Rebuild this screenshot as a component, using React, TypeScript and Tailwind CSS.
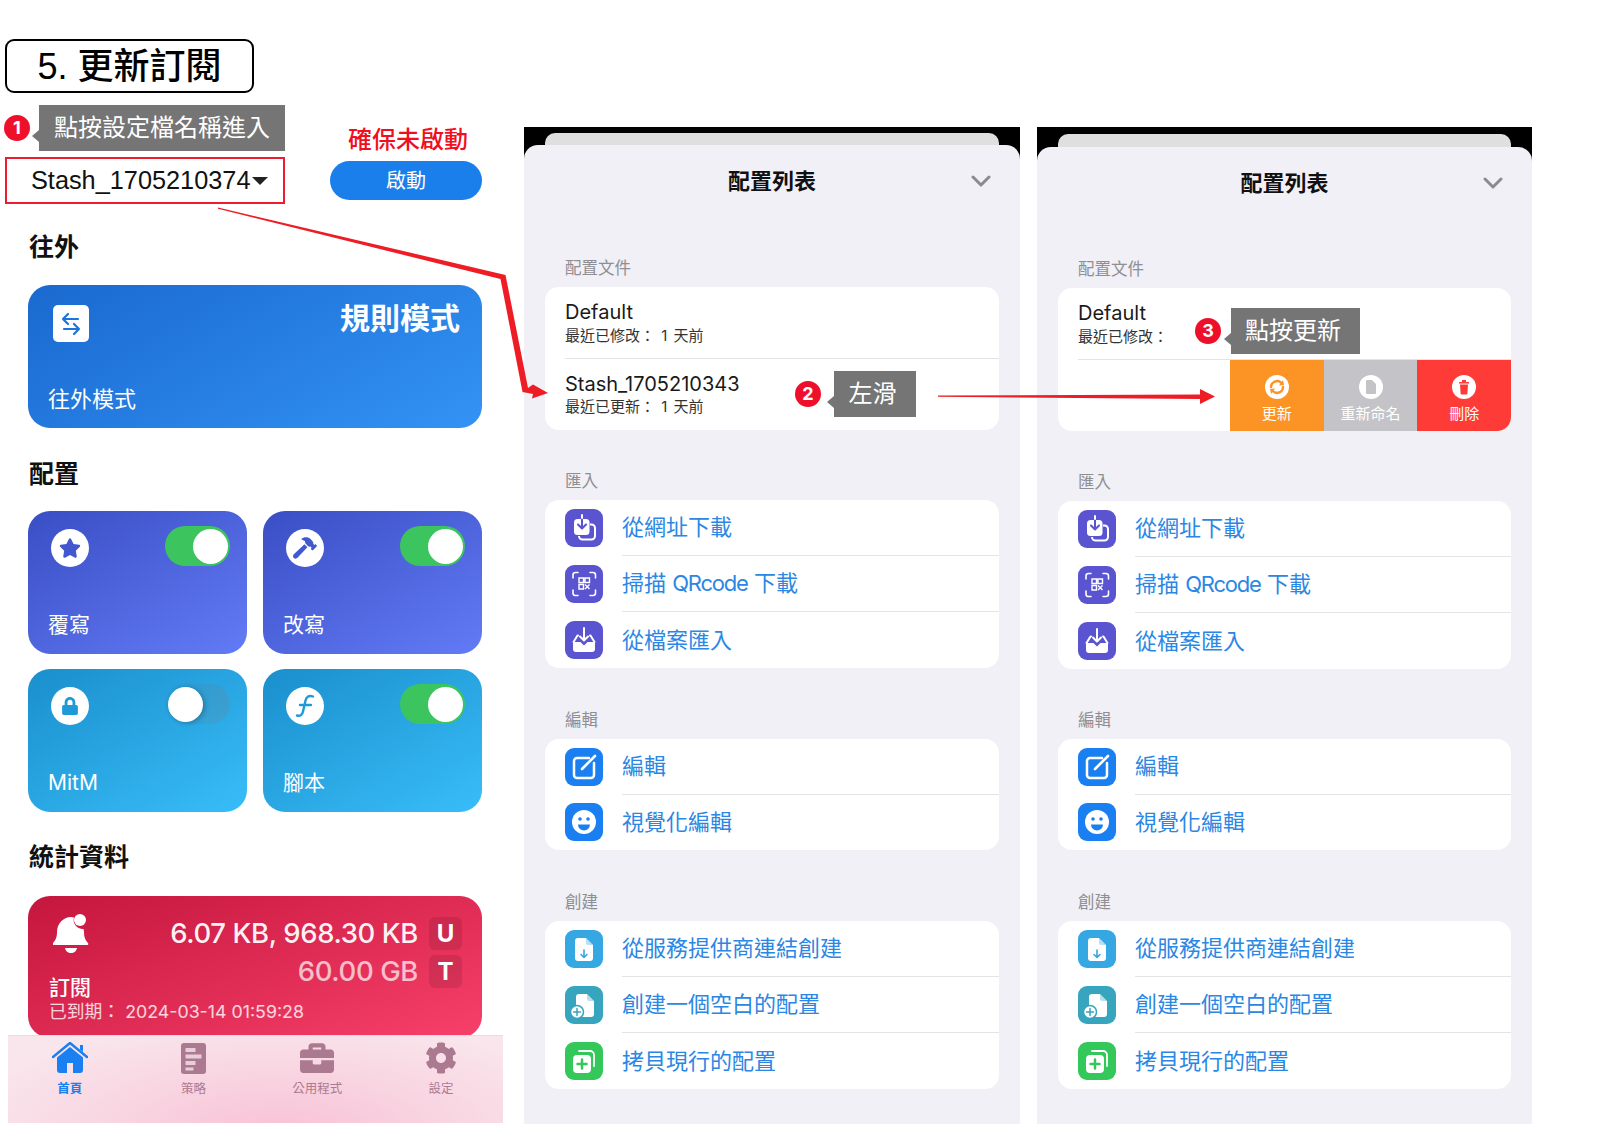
import type { ReactNode } from 'react';
import { FaBriefcase, FaCog, FaHammer, FaLock, FaStar } from 'react-icons/fa';

const Callout = ({ n, text, gapClass, boxClass }: { n: number; text: string; gapClass: string; boxClass: string }) => (
  <div className={`flex items-center ${gapClass}`}>
    <div className="w-[26px] h-[26px] rounded-full bg-[#ee0f2b] text-white text-[18px] font-bold flex items-center justify-center leading-none">
      {n}
    </div>
    <div className={`relative h-[46px] bg-[#757575] text-white text-[24px] flex items-center justify-center ${boxClass}`}>
      <span className="absolute -left-[7px] bottom-[9px] w-0 h-0 border-y-[6px] border-y-transparent border-r-[7px] border-r-[#757575]" />
      {text}
    </div>
  </div>
);

const Toggle = ({ on = true }: { on?: boolean }) =>
  on ? (
    <div className="w-[65px] h-[40px] rounded-full bg-[#3cc45f] flex items-center justify-end pr-[2px]">
      <div className="w-[35px] h-[35px] rounded-full bg-white" />
    </div>
  ) : (
    <div className="w-[65px] h-[40px] rounded-full bg-[linear-gradient(90deg,rgba(0,0,0,0.02),rgba(120,120,120,0.22))] flex items-center pl-[3px]">
      <div className="w-[35px] h-[35px] rounded-full bg-white shadow-[2px_1px_5px_rgba(0,0,0,0.25)]" />
    </div>
  );

const ConfigCard = ({ icon, label, on, bgClass }: { icon: ReactNode; label: string; on?: boolean; bgClass: string }) => (
  <div className={`h-[143px] rounded-[22px] pl-[20px] pr-[17px] pt-[15px] pb-[16px] flex flex-col justify-between text-white ${bgClass}`}>
    <div className="flex items-start justify-between">
      <div className="ml-[3px] mt-[3px] w-[38px] h-[38px] rounded-full bg-white flex items-center justify-center">{icon}</div>
      <Toggle on={on} />
    </div>
    <div className="text-[21px] leading-[26px]">{label}</div>
  </div>
);

const Tab = ({ icon, label, active }: { icon: ReactNode; label: string; active?: boolean }) => (
  <div className={`w-[124px] flex flex-col items-center ${active ? 'text-[#1a7ff0]' : 'text-[#ab7a90]'}`}>
    <div className="h-[36px] flex items-center justify-center">{icon}</div>
    <div className={`mt-[4px] text-[12.5px] leading-[18px] ${active ? 'font-bold' : ''}`}>{label}</div>
  </div>
);

const Tile = ({ bgClass, children }: { bgClass: string; children: ReactNode }) => (
  <div className={`w-[38px] h-[38px] rounded-[9px] shrink-0 ${bgClass}`}>
    <svg viewBox="0 0 38 38" width="38" height="38">
      {children}
    </svg>
  </div>
);

const DownloadIcon = () => (
  <Tile bgClass="bg-[#5a54d0]">
    <path d="M25 15.500h1.500a3.500 3.500 0 0 1 3.500 3.500v8a3.500 3.500 0 0 1-3.500 3.500h-9a3.500 3.500 0 0 1-3.500-3.500" fill="none" stroke="#fff" strokeWidth="2" />
    <rect x="9" y="10" width="15.500" height="16" rx="3.500" fill="#fff" />
    <path d="M17 7v12M13 15.500l4 4 4-4" fill="none" stroke="#5a54d0" strokeWidth="2" strokeLinecap="round" strokeLinejoin="round" />
    <path d="M17 6v3" stroke="#fff" strokeWidth="2" strokeLinecap="round" />
  </Tile>
);

const ScanIcon = () => (
  <Tile bgClass="bg-[#5a54d0]">
    <path d="M8 13V10a2.500 2.500 0 0 1 2.500-2.500H13M25 7.500h3a2.500 2.500 0 0 1 2.500 2.500v3M30.500 25v3a2.500 2.500 0 0 1-2.500 2.500h-3M13 30.500h-3A2.500 2.500 0 0 1 8 28v-3" fill="none" stroke="#fff" strokeWidth="1.600" strokeLinecap="round" />
    <path d="M14 13h4.500v4.500H14zM20 13h4.500v4.500H20zM14 19.500h4.500V24H14zM20 19.500l4.500 4.500M24.500 19.500L20 24" fill="none" stroke="#fff" strokeWidth="1.400" />
  </Tile>
);

const TrayIcon = () => (
  <Tile bgClass="bg-[#5a54d0]">
    <path d="M13 14.500h-.5L8.500 21M25 14.500h.5l4 6.500" fill="none" stroke="#fff" strokeWidth="2" strokeLinecap="round" strokeLinejoin="round" />
    <path d="M8 21h7.500l3.500 3.500 3.500-3.500H30v7a3 3 0 0 1-3 3H11a3 3 0 0 1-3-3z" fill="#fff" />
    <path d="M19 7v12M15 15.500l4 4 4-4" fill="none" stroke="#fff" strokeWidth="2" strokeLinecap="round" strokeLinejoin="round" />
  </Tile>
);

const EditIcon = () => (
  <Tile bgClass="bg-[#1a7ff0]">
    <path d="M24 10H12a3 3 0 0 0-3 3v14a3 3 0 0 0 3 3h14a3 3 0 0 0 3-3V15" fill="none" stroke="#fff" strokeWidth="2.500" strokeLinecap="round" />
    <path d="M17 21L30 8" fill="none" stroke="#fff" strokeWidth="2.600" strokeLinecap="round" />
  </Tile>
);

const SmileIcon = () => (
  <Tile bgClass="bg-[#1a7ff0]">
    <circle cx="19" cy="19" r="12" fill="#fff" />
    <circle cx="15" cy="16" r="1.800" fill="#1a7ff0" />
    <circle cx="23" cy="16" r="1.800" fill="#1a7ff0" />
    <path d="M13 21.500h12a6 6 0 0 1-12 0z" fill="#1a7ff0" />
  </Tile>
);

const FileDownIcon = () => (
  <Tile bgClass="bg-[#35a7e3]">
    <path d="M13 8h8l7 7v13a3 3 0 0 1-3 3H13a3 3 0 0 1-3-3V11a3 3 0 0 1 3-3z" fill="#fff" />
    <path d="M21 8v5a2 2 0 0 0 2 2h5z" fill="#35a7e3" opacity="0.35" />
    <path d="M19 20v7M16 24.500l3 3 3-3" fill="none" stroke="#35a7e3" strokeWidth="1.600" strokeLinecap="round" strokeLinejoin="round" />
  </Tile>
);

const FilePlusIcon = () => (
  <Tile bgClass="bg-[#36a5bd]">
    <path d="M14 8h8l7 7v13a3 3 0 0 1-3 3H14a3 3 0 0 1-3-3V11a3 3 0 0 1 3-3z" fill="#fff" />
    <path d="M22 8v5a2 2 0 0 0 2 2h5z" fill="#36a5bd" opacity="0.35" />
    <circle cx="12" cy="26" r="6.500" fill="#fff" stroke="#36a5bd" strokeWidth="1.500" />
    <path d="M12 22.500v7M8.500 26h7" stroke="#36a5bd" strokeWidth="1.500" strokeLinecap="round" />
  </Tile>
);

const CopyPlusIcon = () => (
  <Tile bgClass="bg-[#34c759]">
    <path d="M14 9h11a4 4 0 0 1 4 4v11" fill="none" stroke="#fff" strokeWidth="1.800" strokeLinecap="round" />
    <rect x="8" y="13" width="18" height="18" rx="4" fill="#fff" />
    <path d="M17 17.500v9M12.500 22h9" stroke="#34c759" strokeWidth="2.500" strokeLinecap="round" />
  </Tile>
);

const ListRow = ({ icon, text, last }: { icon: ReactNode; text: ReactNode; last?: boolean }) => (
  <div className="h-[56px] flex items-center pl-[20px] gap-[19px]">
    {icon}
    <div className={`flex-1 h-full flex items-center whitespace-pre text-[22px] text-[#2b87e3] ${last ? '' : 'border-b border-[#e3e3e8]'}`}>{text}</div>
  </div>
);

const Label = ({ text }: { text: string }) => (
  <div className="pl-[20px] h-[20px] mb-[9px] text-[16.500px] leading-[20px] text-[#8e8e93]">{text}</div>
);

const Sheet = ({ profiles, mts }: { profiles: ReactNode; mts: string[] }) => (
  <div className="flex-1 bg-[#f0f0f6] rounded-t-[14px] px-[21px] flex flex-col">
    <div className="h-[72px] relative flex items-center justify-center text-[22px] font-bold text-[#111]">
      配置列表
      <svg className="absolute right-[8px] top-[30px]" width="20" height="12" viewBox="0 0 20 12">
        <path d="M2 2l8 8 8-8" fill="none" stroke="#8a8a8f" strokeWidth="3" strokeLinecap="round" strokeLinejoin="round" />
      </svg>
    </div>
    <div className={mts[0]}>
      <Label text="配置文件" />
      {profiles}
    </div>
    <div className={mts[1]}>
      <Label text="匯入" />
      <div className="bg-white rounded-[14px]">
        <ListRow icon={<DownloadIcon />} text="從網址下載" />
        <ListRow
          icon={<ScanIcon />}
          text={
            <>
              掃描 <span className="tracking-[-1.200px]">QRcode</span> 下載
            </>
          }
        />
        <ListRow icon={<TrayIcon />} text="從檔案匯入" last />
      </div>
    </div>
    <div className={mts[2]}>
      <Label text="編輯" />
      <div className="bg-white rounded-[14px] h-[111px]">
        <ListRow icon={<EditIcon />} text="編輯" />
        <div className="-mt-[1px]">
          <ListRow icon={<SmileIcon />} text="視覺化編輯" last />
        </div>
      </div>
    </div>
    <div className={mts[3]}>
      <Label text="創建" />
      <div className="bg-white rounded-[14px]">
        <ListRow icon={<FileDownIcon />} text="從服務提供商連結創建" />
        <ListRow icon={<FilePlusIcon />} text="創建一個空白的配置" />
        <ListRow icon={<CopyPlusIcon />} text="拷貝現行的配置" last />
      </div>
    </div>
  </div>
);

const ProfileText = ({ name, sub, tight }: { name: string; sub: string; tight?: boolean }) => (
  <div className={tight ? 'pt-[12px] pl-[20px]' : 'pt-[11px] pl-[20px]'}>
    <div className={`text-[20px] text-[#1a1a1a] ${tight ? 'leading-[26px]' : 'leading-[28px]'}`}>{name}</div>
    <div className="text-[15px] leading-[20px] text-[#333] whitespace-nowrap [word-spacing:2px]">{sub}</div>
  </div>
);

const SwipeAction = ({ label, bgClass, children }: { label: string; bgClass: string; children: ReactNode }) => (
  <div className={`flex-1 flex flex-col items-center pt-[15px] text-white ${bgClass}`}>
    <svg width="24" height="24" viewBox="0 0 24 24">
      {children}
    </svg>
    <div className="mt-[5px] text-[15px] leading-[20px]">{label}</div>
  </div>
);

const App = () => (
  <div className="relative w-[1612px] h-[1130px] bg-white overflow-hidden flex font-['Inter','Noto_Sans_CJK_TC',sans-serif]">
    {/* 左欄 */}
    <div className="w-[503px] shrink-0 pt-[39px] flex flex-col">
      <div className="ml-[5px] w-[249px] h-[54px] border-2 border-black rounded-[9px] flex items-center justify-center pt-[2px] text-[36px] font-medium text-black font-['Liberation_Sans','Noto_Sans_CJK_TC',sans-serif]">
        5. 更新訂閱
      </div>
      <div className="mt-[12px] flex">
        <div className="pl-[4px]">
          <Callout n={1} text="點按設定檔名稱進入" gapClass="gap-[9px]" boxClass="w-[246px]" />
          <div className="ml-[1px] mt-[6px] w-[280px] h-[47px] border-2 border-[#ee1c30] flex items-center pl-[24px] text-[25.300px] text-[#111] font-['Liberation_Sans',sans-serif]">
            Stash_1705210374
            <span className="ml-[2px] mt-[1px] w-0 h-0 border-x-[8px] border-x-transparent border-t-[8px] border-t-[#222]" />
          </div>
        </div>
        <div className="ml-[45px] w-[152px] pt-[20px] flex flex-col items-center">
          <div className="h-[28px] ml-[4px] mt-[1px] -mb-[1px] leading-[28px] text-[24px] font-medium text-[#f00f1e] whitespace-nowrap">確保未啟動</div>
          <div className="mt-[8px] w-[152px] h-[39px] rounded-full bg-[#1a7fea] text-white text-[20px] flex items-center justify-center">啟動</div>
        </div>
      </div>

      <div className="pl-[29px] mt-[30px] h-[26px] leading-[26px] text-[25px] font-semibold text-[#111]">往外</div>
      <div className="ml-[28px] mr-[21px] mt-[25px] h-[143px] rounded-[22px] bg-[linear-gradient(150deg,#1a69cf,#3393f5)] pl-[20px] pr-[22px] pt-[15px] pb-[15px] flex flex-col justify-between text-white">
        <div className="flex items-start justify-between">
          <div className="ml-[5px] mt-[5px] w-[36px] h-[37px] rounded-[5px] bg-white flex items-center justify-center">
            <svg width="26" height="26" viewBox="0 0 26 26" fill="none" stroke="#1a74dc" strokeWidth="2.200" strokeLinecap="round" strokeLinejoin="round">
              <path d="M20 8H5M10 3L5 8l5 5" />
              <path d="M6 18h15M16 13l5 5-5 5" />
            </svg>
          </div>
          <div className="text-[30px] leading-[36px] font-semibold">規則模式</div>
        </div>
        <div className="text-[22px] leading-[28px]">往外模式</div>
      </div>

      <div className="pl-[29px] mt-[33px] h-[26px] leading-[26px] text-[25px] font-semibold text-[#111]">配置</div>
      <div className="ml-[28px] mr-[21px] mt-[24px] grid grid-cols-2 gap-x-[16px] gap-y-[15px]">
        <ConfigCard icon={<FaStar className="text-[#4158d0] text-[22px]" />} label="覆寫" on bgClass="bg-[linear-gradient(150deg,#3a4ec4,#627bf6)]" />
        <ConfigCard icon={<FaHammer className="text-[#4158d0] text-[24px]" />} label="改寫" on bgClass="bg-[linear-gradient(150deg,#3a4ec4,#627bf6)]" />
        <ConfigCard icon={<FaLock className="text-[#1f9ad8] text-[18px]" />} label="MitM" on={false} bgClass="bg-[linear-gradient(150deg,#1a8fcd,#38bdf8)]" />
        <ConfigCard
          icon={
            <svg width="24" height="26" viewBox="0 0 24 26" fill="none" stroke="#1f9ad8" strokeWidth="2.400" strokeLinecap="round">
              <path d="M20 3.500c-4-1.500-6.500 0-7.500 4l-2.500 11c-.8 3.500-3 5-6 4" />
              <path d="M7 12h11" />
            </svg>
          }
          label="腳本"
          on
          bgClass="bg-[linear-gradient(150deg,#1a8fcd,#38bdf8)]"
        />
      </div>

      <div className="pl-[29px] mt-[32px] h-[26px] leading-[26px] text-[25px] font-semibold text-[#111]">統計資料</div>
      <div className="ml-[28px] mr-[21px] mt-[26px] h-[142px] rounded-[22px] bg-[linear-gradient(160deg,#c5163d,#f7406a)] pl-[21px] pr-[20px] flex text-white">
        <div className="w-[120px] shrink-0 flex flex-col">
          <svg className="mt-[18px] ml-[4px]" width="36" height="41" viewBox="0 0 36 41" fill="#fff">
            <path d="M18 3c1 0 2 .2 3 .6a9 9 0 0 0 9.500 11.300c.3 1 .5 2 .5 3.100 0 7 2.500 9 4 11 .5.700.500 2-1 2H1c-1.500 0-1.500-1.300-1-2 1.500-2 4-4 4-11C4 10 10 3 18 3z" />
            <circle cx="27" cy="6" r="6" />
            <path d="M12 34h12c-.5 3-3 5-6 5s-5.500-2-6-5z" />
          </svg>
          <div className="mt-[20px] text-[21px] leading-[26px] font-medium">訂閱</div>
          <div className="text-[17.800px] leading-[22px] whitespace-nowrap text-white/80">已到期： 2024-03-14 01:59:28</div>
        </div>
        <div className="ml-auto pt-[21px] flex flex-col items-end gap-[5px]">
          <div className="flex items-center gap-[11px]">
            <span className="text-[27.500px] leading-[33px] font-medium tracking-[-0.4px] whitespace-nowrap text-white/95">6.07 KB, 968.30 KB</span>
            <span className="w-[33px] h-[33px] rounded-[6px] bg-black/10 flex items-center justify-center text-[24px] font-bold">U</span>
          </div>
          <div className="flex items-center gap-[11px]">
            <span className="text-[27.500px] leading-[33px] font-medium tracking-[-0.4px] whitespace-nowrap text-white/70">60.00 GB</span>
            <span className="w-[33px] h-[33px] rounded-[6px] bg-black/10 flex items-center justify-center text-[24px] font-bold">T</span>
          </div>
        </div>
      </div>
      <div className="ml-[8px] -mt-[3px] relative h-[88px] border-t border-[#e6dde0] bg-[radial-gradient(ellipse_at_55%_110%,#f8c2d6,#f9e6ec_85%)] flex items-start pt-[4px]">
        <Tab
          active
          label="首頁"
          icon={
            <svg width="36" height="32" viewBox="0 0 36 32" fill="#1a7ff0">
              <path d="M1 15L18 1l17 14" fill="none" stroke="#1a7ff0" strokeWidth="2.400" strokeLinecap="round" strokeLinejoin="round" />
              <path d="M28 3h3v7l-3-2.500z" />
              <path fillRule="evenodd" d="M18 5l13 10.500V28a3 3 0 0 1-3 3H8a3 3 0 0 1-3-3V15.500zM15 21v10h6V21z" />
            </svg>
          }
        />
        <Tab
          label="策略"
          icon={
            <svg width="25" height="31" viewBox="0 0 25 31">
              <rect width="25" height="31" rx="3" fill="#ab7a90" />
              <path d="M4.500 5h10v4h-10zM4.500 11.500h16v4h-16zM4.500 18h10v4h-10zM4.500 24.500h8v3h-8z" fill="#e9cdd9" />
            </svg>
          }
        />
        <Tab label="公用程式" icon={<FaBriefcase className="text-[34px]" />} />
        <Tab label="設定" icon={<FaCog className="text-[32px]" />} />
      </div>
    </div>

    {/* 配置列表 1 */}
    <div className="ml-[21px] mt-[127px] w-[496px] h-[997px] bg-black flex flex-col relative">
      <div className="mx-[21px] mt-[6px] h-[18px] -mb-[6px] rounded-t-[10px] bg-[#dfdfdf]" />
      <Sheet
        mts={['mt-[41px]', 'mt-[41px]', 'mt-[42px]', 'mt-[42px]']}
        profiles={
          <div className="bg-white rounded-[14px] h-[143px]">
            <div className="h-[71px]">
              <ProfileText name="Default" sub="最近已修改： 1 天前" />
            </div>
            <div className="ml-[20px] border-t border-[#e3e3e8]" />
            <ProfileText tight name="Stash_1705210343" sub="最近已更新： 1 天前" />
          </div>
        }
      />
      <div className="absolute left-[271px] top-[244px]">
        <Callout n={2} text="左滑" gapClass="gap-[13px]" boxClass="w-[82px] pr-[5px]" />
      </div>
    </div>

    {/* 配置列表 2 */}
    <div className="ml-[17px] mt-[127px] w-[495px] h-[997px] bg-black flex flex-col relative">
      <div className="mx-[21px] mt-[7px] h-[19px] -mb-[6px] rounded-t-[10px] bg-[#dfdfdf]" />
      <Sheet
        mts={['mt-[40px]', 'mt-[41px]', 'mt-[41px]', 'mt-[42px]']}
        profiles={
          <div className="bg-white rounded-[14px] h-[143px] overflow-hidden flex flex-col">
            <div className="h-[71px]">
              <ProfileText name="Default" sub="最近已修改：" />
            </div>
            <div className="ml-[20px] border-t border-[#e3e3e8]" />
            <div className="flex-1 pl-[172px] flex">
              <SwipeAction label="更新" bgClass="bg-[#fb9425]">
                <circle cx="12" cy="12" r="12" fill="#fff" />
                <path d="M6 12a6 6 0 0 1 10.200-4.200" fill="none" stroke="#fb9425" strokeWidth="2.400" strokeLinecap="round" />
                <path d="M18 12a6 6 0 0 1-10.200 4.200" fill="none" stroke="#fb9425" strokeWidth="2.400" strokeLinecap="round" />
                <path d="M14 10.500l5-.5-1-5zM10 13.500l-5 .5 1 5z" fill="#fb9425" />
              </SwipeAction>
              <SwipeAction label="重新命名" bgClass="bg-[#c4c4c8]">
                <circle cx="12" cy="12" r="12" fill="#fff" />
                <path d="M8 5h5l4 4v9a1 1 0 0 1-1 1H8a1 1 0 0 1-1-1V6a1 1 0 0 1 1-1z" fill="#c4c4c8" />
              </SwipeAction>
              <SwipeAction label="刪除" bgClass="bg-[#fe3b37]">
                <circle cx="12" cy="12" r="12" fill="#fff" />
                <path d="M7 7h10v1.500H7zM10 5h4v2h-4zM8 9.500h8l-.6 9a1 1 0 0 1-1 1H9.600a1 1 0 0 1-1-1z" fill="#fe3b37" />
              </SwipeAction>
            </div>
          </div>
        }
      />
      <div className="absolute left-[158px] top-[181px]">
        <Callout n={3} text="點按更新" gapClass="gap-[10px]" boxClass="w-[129px] pr-[5px]" />
      </div>
    </div>

    {/* 箭頭 */}
    <svg className="absolute inset-0 pointer-events-none" width="1612" height="1130" viewBox="0 0 1612 1130" fill="#ee1c25">
      <path d="M218 207.500L505.500 275L528 388L533 384.500L548 393L532 398.500L533 394L522.500 392L500.500 279L218 208.800z" />
      <path d="M938 395.500L1200 394.500V389L1215 396.500L1200 404V399L938 396.800z" />
    </svg>
  </div>
);

export default App;
